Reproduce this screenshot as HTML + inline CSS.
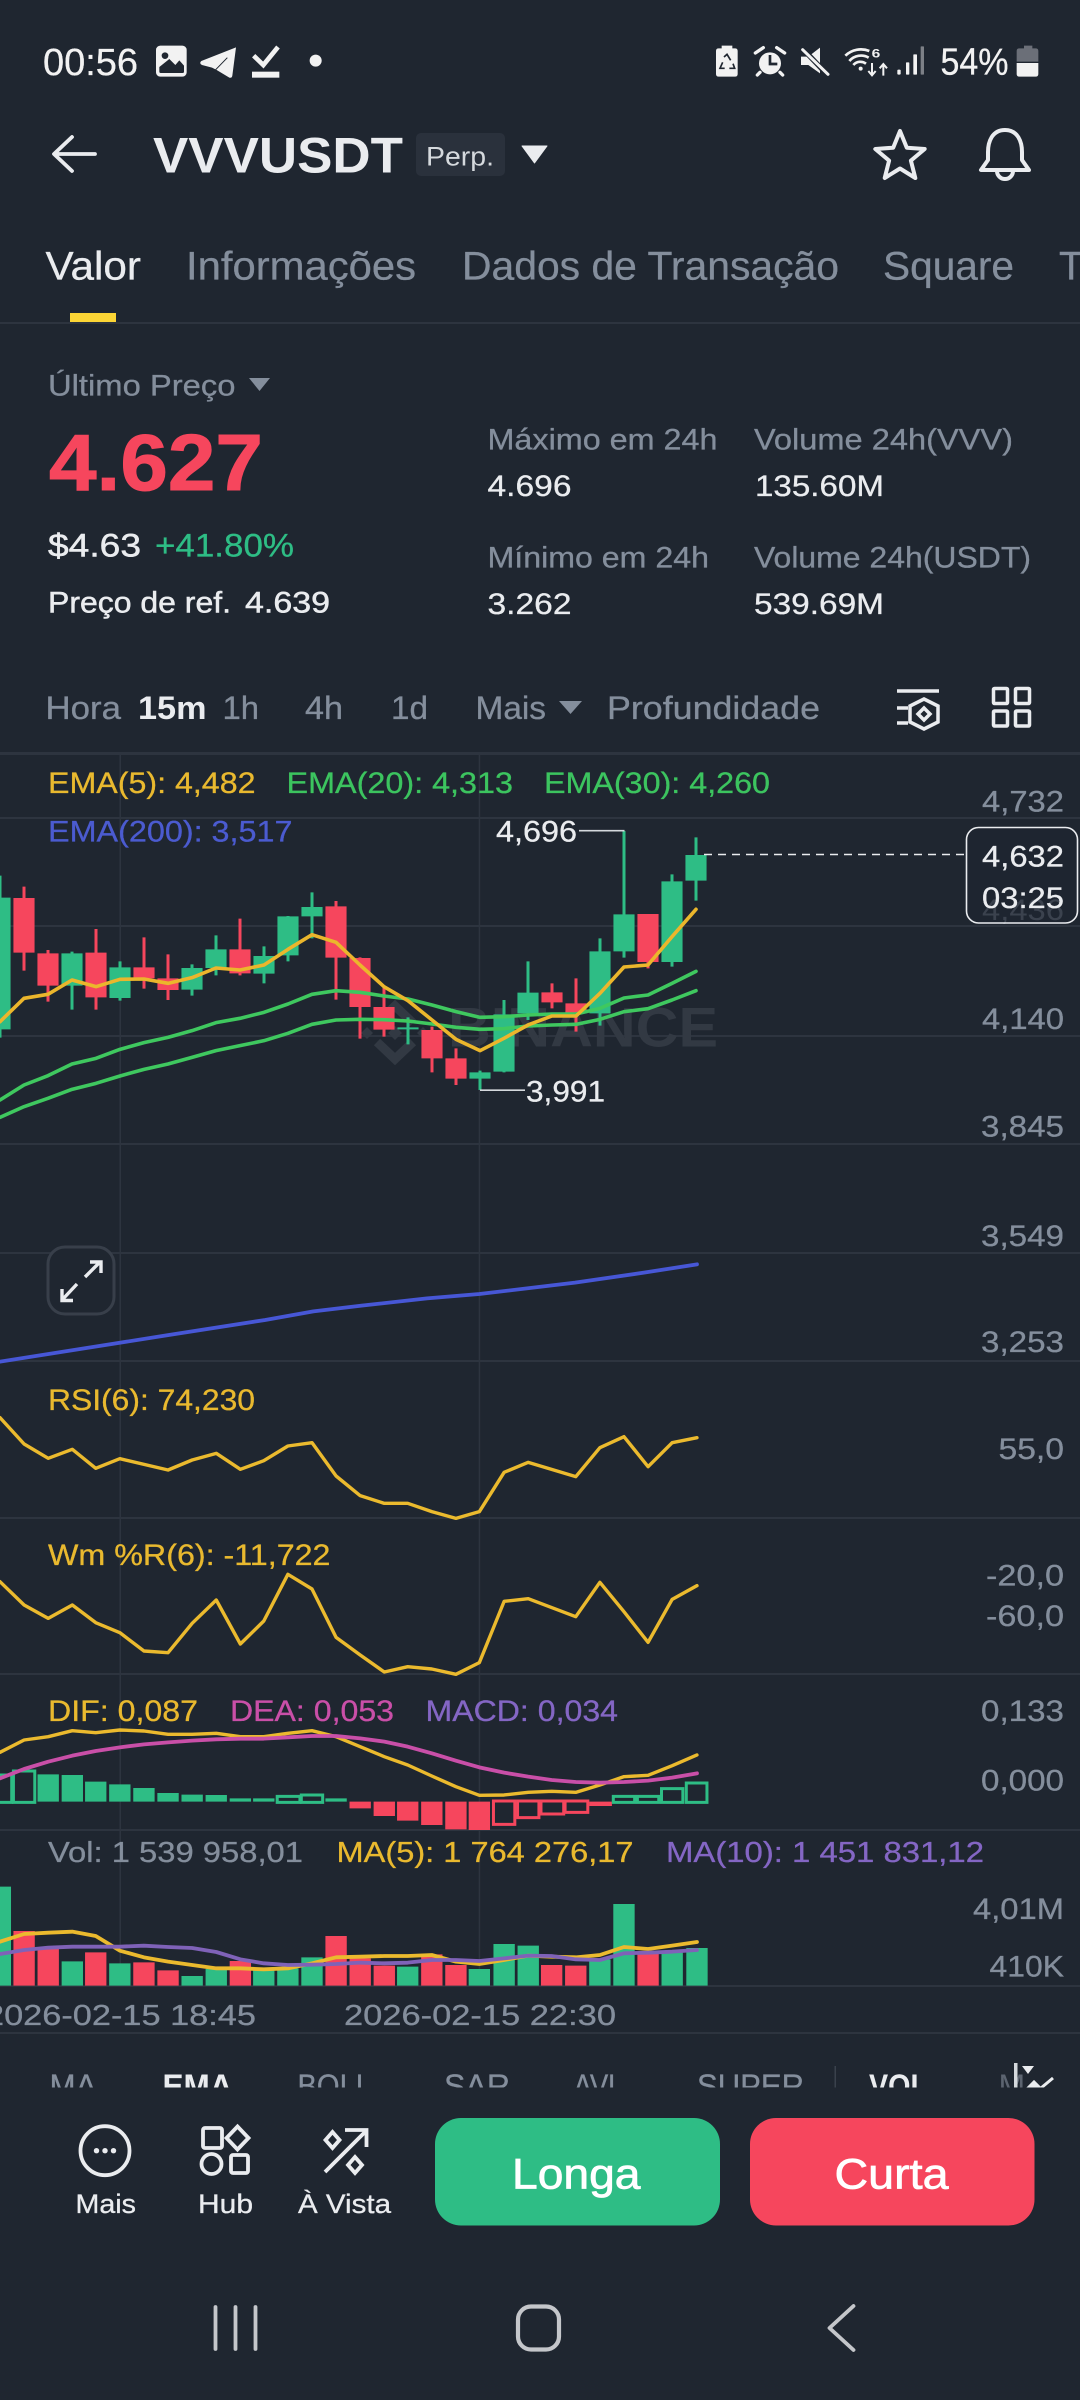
<!DOCTYPE html>
<html lang="pt"><head><meta charset="utf-8"><title>VVVUSDT</title>
<style>
html,body{margin:0;padding:0;background:#1f2630}
svg{display:block;font-family:"Liberation Sans",sans-serif}
.w{fill:#eaecef;stroke:#eaecef;stroke-width:.3}.g{fill:#848e9c;stroke:#848e9c;stroke-width:.3}.y{fill:#e9b92f;stroke:#e9b92f;stroke-width:.3}.e{fill:#3cc45f;stroke:#3cc45f;stroke-width:.3}.b{fill:#4b5bd0;stroke:#4b5bd0;stroke-width:.3}.p{fill:#c94fa8;stroke:#c94fa8;stroke-width:.3}.u{fill:#8466c4;stroke:#8466c4;stroke-width:.3}
text[font-weight="700"]{stroke:none}
.l{fill:none;stroke-linejoin:round;stroke-linecap:round}
.l polyline,.n{vector-effect:non-scaling-stroke}
</style></head><body>
<svg width="1080" height="2400" viewBox="0 0 1080 2400" xmlns="http://www.w3.org/2000/svg">
<defs><clipPath id="c1"><rect x="0" y="2055" width="1080" height="32.5"/></clipPath></defs>
<rect width="1080" height="2400" fill="#1f2630"/>

<!-- status bar -->
<text x="43" y="75" font-size="38" fill="#f2f2f2" stroke="#f2f2f2" stroke-width=".3" textLength="95" lengthAdjust="spacingAndGlyphs">00:56</text>
<g transform="translate(150 35) scale(.33333)">
<rect x="18" y="32" width="92" height="93" rx="13" fill="#f2f2f2"/>
<circle cx="45" cy="62" r="10" fill="#1f2630"/>
<path d="M28 110V96L58 72L76 90L88 76L102 92V110Q102 114 98 114H32Q28 114 28 110Z" fill="#1f2630"/>
<path d="M258 37L154 78Q146 85 156 90L186 98L200 105L238 128Q246 130 247 122Z" fill="#f2f2f2"/>
<path d="M197 104L232 68" stroke="#1f2630" stroke-width="3"/>
<path d="M311 62L340 90L384 36" fill="none" stroke="#f2f2f2" stroke-width="14"/>
<rect x="306" y="110" width="82" height="18" fill="#f2f2f2"/>
<circle cx="497" cy="77" r="18" fill="#f2f2f2"/>
</g>
<g transform="translate(700 35) scale(.33333)">
<path d="M65 32H97V40H105Q113 40 113 48V117Q113 125 105 125H56Q48 125 48 117V48Q48 40 56 40H65Z" fill="#f2f2f2"/>
<path d="M72 66L81 58L92 76M99 86L104 100H88M74 100H60L68 82" fill="none" stroke="#1f2630" stroke-width="5"/>
<circle cx="210" cy="85" r="33" fill="#f2f2f2"/>
<path d="M210 60V87H232" fill="none" stroke="#1f2630" stroke-width="8"/>
<path d="M166 54L190 38M230 38L254 54M180 112L172 120M240 112L248 120" stroke="#f2f2f2" stroke-width="10" stroke-linecap="round"/>
<path d="M303 65H325L360 38V115L325 90H303Z" fill="#f2f2f2"/>
<path d="M305 38L385 122" stroke="#1f2630" stroke-width="16"/>
<path d="M308 44L384 118" stroke="#f2f2f2" stroke-width="9" stroke-linecap="round"/>
<path d="M436 62A68 68 0 0 1 508 48M448 78A46 46 0 0 1 506 68M460 90A28 28 0 0 1 498 86" fill="none" stroke="#f2f2f2" stroke-width="8"/>
<circle cx="482" cy="101" r="6" fill="#f2f2f2"/>
<text x="515" y="68" font-size="36" font-weight="700" fill="#f2f2f2" textLength="26" lengthAdjust="spacingAndGlyphs">6</text>
<path d="M516 84V120M505 108L516 121L527 108M550 122V88M539 100L550 87L561 100" fill="none" stroke="#f2f2f2" stroke-width="6"/>
<rect x="592" y="104" width="10" height="15" rx="3" fill="#f2f2f2"/>
<rect x="618" y="82" width="10" height="37" rx="2" fill="#f2f2f2"/>
<rect x="640" y="58" width="11" height="61" rx="2" fill="#f2f2f2"/>
<rect x="662" y="34" width="10" height="85" rx="2" fill="#7d8087"/>
<path d="M972 32H997V40H1007Q1015 40 1015 48V80H950V48Q950 40 958 40H972Z" fill="#6b6f78"/>
<path d="M950 84H1015V117Q1015 125 1007 125H958Q950 125 950 117Z" fill="#f2f2f2"/>
</g>
<text x="940.5" y="74.5" font-size="38" fill="#f2f2f2" stroke="#f2f2f2" stroke-width=".3" textLength="68" lengthAdjust="spacingAndGlyphs">54%</text>

<!-- header -->
<path d="M95 154H56M72 137L54 154L72 171" fill="none" stroke="#eaecef" stroke-width="3.8" stroke-linecap="round" stroke-linejoin="round"/>
<text x="153" y="172.5" font-size="50" font-weight="700" class="w" textLength="250" lengthAdjust="spacingAndGlyphs">VVVUSDT</text>
<rect x="416" y="133" width="89" height="43" rx="5" fill="#2a313c"/>
<text x="426" y="165.5" font-size="27" fill="#d5d9dd" textLength="68" lengthAdjust="spacingAndGlyphs">Perp.</text>
<path d="M522 146H547L534.5 163Z" fill="#eaecef" stroke="#eaecef" stroke-width="1" stroke-linejoin="round"/>
<path d="M900 131L906.8 147.7L924.7 149L910.9 160.6L915.3 178L900 168.5L884.7 178L889.1 160.6L875.3 149L893.2 147.7Z" fill="none" stroke="#eaecef" stroke-width="4" stroke-linejoin="round"/>
<path d="M1005 130C992 130 988 142 988 152V160L981 170H1029L1022 160V152C1022 142 1018 130 1005 130ZM997 171A8 8 0 0 0 1013 171" fill="none" stroke="#eaecef" stroke-width="4" stroke-linejoin="round"/>

<!-- tabs -->
<text x="45.5" y="279.5" font-size="40" class="w" textLength="95.5" lengthAdjust="spacingAndGlyphs">Valor</text>
<text x="186" y="279.5" font-size="40" class="g" textLength="230" lengthAdjust="spacingAndGlyphs">Informações</text>
<text x="462" y="279.5" font-size="40" class="g" textLength="377" lengthAdjust="spacingAndGlyphs">Dados de Transação</text>
<text x="883" y="279.5" font-size="40" class="g" textLength="131" lengthAdjust="spacingAndGlyphs">Square</text>
<text x="1059" y="279.5" font-size="40" class="g">T</text>
<rect x="70" y="313" width="46" height="9" fill="#fcd535"/>
<rect x="0" y="322" width="1080" height="2" fill="#2d343f"/>

<!-- price -->
<text x="48" y="395.5" font-size="30" class="g" textLength="187.5" lengthAdjust="spacingAndGlyphs">Último Preço</text>
<path d="M249 378H270L259.5 391Z" fill="#848e9c"/>
<text x="49" y="490" font-size="80" font-weight="700" fill="#f6465d" stroke="#f6465d" stroke-width="1" style="stroke:#f6465d" textLength="214" lengthAdjust="spacingAndGlyphs">4.627</text>
<text x="48" y="556.5" font-size="32" class="w" style="stroke-width:.5" textLength="93" lengthAdjust="spacingAndGlyphs">$4.63</text>
<text x="155" y="556.5" font-size="32" fill="#2ebd85" stroke="#2ebd85" stroke-width=".3" textLength="139" lengthAdjust="spacingAndGlyphs">+41.80%</text>
<text x="48" y="612.5" font-size="30" class="w" style="stroke-width:.5" textLength="183" lengthAdjust="spacingAndGlyphs">Preço de ref.</text>
<text x="245" y="612.5" font-size="30" class="w" style="stroke-width:.5" textLength="85" lengthAdjust="spacingAndGlyphs">4.639</text>
<text x="487.5" y="449.5" font-size="30" class="g" textLength="230" lengthAdjust="spacingAndGlyphs">Máximo em 24h</text>
<text x="754" y="449.5" font-size="30" class="g" textLength="259" lengthAdjust="spacingAndGlyphs">Volume 24h(VVV)</text>
<text x="487.5" y="496" font-size="30" class="w" textLength="84" lengthAdjust="spacingAndGlyphs">4.696</text>
<text x="755" y="496" font-size="30" class="w" textLength="129" lengthAdjust="spacingAndGlyphs">135.60M</text>
<text x="487.5" y="567.5" font-size="30" class="g" textLength="221.5" lengthAdjust="spacingAndGlyphs">Mínimo em 24h</text>
<text x="754" y="567.5" font-size="30" class="g" textLength="277" lengthAdjust="spacingAndGlyphs">Volume 24h(USDT)</text>
<text x="487.5" y="614" font-size="30" class="w" textLength="84" lengthAdjust="spacingAndGlyphs">3.262</text>
<text x="754" y="614" font-size="30" class="w" textLength="130" lengthAdjust="spacingAndGlyphs">539.69M</text>

<!-- timeframe row -->
<text x="45.5" y="719" font-size="32" class="g" textLength="75.5" lengthAdjust="spacingAndGlyphs">Hora</text>
<text x="138" y="719" font-size="32" font-weight="700" class="w" textLength="68.5" lengthAdjust="spacingAndGlyphs">15m</text>
<text x="222.5" y="719" font-size="32" class="g" textLength="36.5" lengthAdjust="spacingAndGlyphs">1h</text>
<text x="305" y="719" font-size="32" class="g" textLength="38" lengthAdjust="spacingAndGlyphs">4h</text>
<text x="391" y="719" font-size="32" class="g" textLength="37" lengthAdjust="spacingAndGlyphs">1d</text>
<text x="475.5" y="719" font-size="32" class="g" textLength="70.5" lengthAdjust="spacingAndGlyphs">Mais</text>
<path d="M559 701H582L570.5 714Z" fill="#848e9c"/>
<text x="607" y="719" font-size="32" class="g" textLength="213" lengthAdjust="spacingAndGlyphs">Profundidade</text>
<g fill="none" stroke="#eaecef" stroke-width="3.5">
<path d="M897 691H939M897 708H908M897 723H908"/>
<path d="M924 699L938 706V722L924 729L910 722V706Z"/>
<path d="M924 708L930 714L924 720L918 714Z"/>
<rect x="993.5" y="688.5" width="14" height="15" rx="1"/><rect x="1015.5" y="688.5" width="14" height="15" rx="1"/>
<rect x="993.5" y="711" width="14" height="15" rx="1"/><rect x="1015.5" y="711" width="14" height="15" rx="1"/>
</g>

<!-- grid -->
<g fill="#2d343f">
<rect y="752" width="1080" height="3"/>
<rect y="817" width="1080" height="2"/><rect y="925" width="1080" height="2"/><rect y="1035" width="1080" height="2"/>
<rect y="1143" width="1080" height="2"/><rect y="1252" width="1080" height="2"/><rect y="1360" width="1080" height="2"/>
<rect y="1517" width="1080" height="2"/><rect y="1673" width="1080" height="2"/><rect y="1829" width="1080" height="2"/>
<rect y="1985" width="1080" height="2"/><rect y="2032" width="1080" height="2"/>
<rect x="119.5" y="755" width="1.5" height="1230"/><rect x="478.7" y="755" width="1.5" height="1230"/>
</g>

<!-- watermark -->
<g fill="none" stroke="#323943" stroke-width="9">
<path d="M377 1042L395 1059L413 1042M377 1023L395 1006L413 1023"/>
<path d="M395 1026L402 1033L395 1040L388 1033Z" fill="#323943" stroke="none"/>
<path d="M367 1027L373 1033L367 1039L361 1033Z" fill="#323943" stroke="none"/>
<path d="M423 1027L429 1033L423 1039L417 1033Z" fill="#323943" stroke="none"/>
</g>
<text x="448" y="1046.5" font-size="56" font-weight="700" fill="#323943" textLength="270" lengthAdjust="spacingAndGlyphs">BINANCE</text>

<!-- candles -->
<g transform="translate(0 760) scale(24 .33333)">
<path fill="#2ebd85" d="M-.0625 347h.125V833h-.125zM-.44 413h.88V808h-.88z
M2.9375 575h.125V749h-.125zM2.56 580h.88V677h-.88z
M4.9375 604h.125V722h-.125zM4.56 622h.88V714h-.88z
M7.9375 613h.125V707h-.125zM7.56 624h.88V689h-.88z
M8.9375 526h.125V646h-.125zM8.56 568h.88V624h-.88z
M10.9375 559h.125V670h-.125zM10.56 588h.88V641h-.88z
M11.9375 468h.125V604h-.125zM11.56 469h.88V586h-.88z
M12.9375 397h.125V535h-.125zM12.56 441h.88V469h-.88z
M16.9375 772h.125V853h-.125zM16.56 802h.88V808h-.88z
M19.9375 932h.125V990h-.125zM19.56 937h.88V956h-.88z
M20.9375 720h.125V937h-.125zM20.56 763h.88V935h-.88z
M21.9375 604h.125V780h-.125zM21.56 698h.88V760h-.88z
M24.9375 535h.125V797h-.125zM24.56 574h.88V760h-.88z
M25.9375 213h.125V593h-.125zM25.56 463h.88V574h-.88z
M27.9375 343h.125V620h-.125zM27.56 364h.88V606h-.88z
M28.9375 232h.125V422h-.125zM28.56 285h.88V362h-.88z"/>
<path fill="#f6465d" d="M.9375 380h.125V632h-.125zM.56 414h.88V578h-.88z
M1.9375 570h.125V725h-.125zM1.56 580h.88V677h-.88z
M3.9375 507h.125V749h-.125zM3.56 578h.88V712h-.88z
M5.9375 532h.125V686h-.125zM5.56 622h.88V655h-.88z
M6.9375 583h.125V720h-.125zM6.56 655h.88V690h-.88z
M9.9375 476h.125V646h-.125zM9.56 568h.88V640h-.88z
M13.9375 423h.125V719h-.125zM13.56 439h.88V593h-.88z
M14.9375 592h.125V836h-.125zM14.56 594h.88V741h-.88z
M15.9375 680h.125V830h-.125zM15.56 741h.88V809h-.88z
M17.9375 800h.125V937h-.125zM17.56 810h.88V895h-.88z
M18.9375 865h.125V975h-.125zM18.56 895h.88V956h-.88z
M22.9375 670h.125V745h-.125zM22.56 697h.88V727h-.88z
M23.9375 655h.125V815h-.125zM23.56 730h.88V760h-.88z
M26.9375 462h.125V625h-.125zM26.56 462h.88V606h-.88z"/>
<g class="l" stroke-width="3.6">
<polyline stroke="#3fc85f" points="0,1020 1,975 2,947 3,912 4,895 5,868 6,848 7,832 8,812 9,788 10,775 11,757 12,732 13,703 14,692 15,697 16,708 17,717 18,735 19,755 20,772 21,770 22,765 23,762 24,762 25,745 26,714 27,705 28,670 29,634"/>
<polyline stroke="#3fc85f" points="0,1072 1,1040 2,1015 3,988 4,970 5,948 6,928 7,912 8,892 9,872 10,857 11,842 12,820 13,793 14,780 15,778 16,779 17,783 18,792 19,802 20,808 21,806 22,798 23,795 24,793 25,778 26,755 27,746 28,720 29,692"/>
<polyline stroke="#ebb62c" points="0,785 1,715 2,703 3,660 4,680 5,658 6,657 7,670 8,653 9,624 10,630 11,615 12,568 13,524 14,547 15,615 16,680 17,722 18,780 19,838 20,872 21,835 22,795 23,768 24,768 25,700 26,621 27,615 28,530 29,448"/>
</g>
</g>

<!-- chart labels -->
<text x="48" y="793" font-size="30" class="y" textLength="207.5" lengthAdjust="spacingAndGlyphs">EMA(5): 4,482</text>
<text x="286.5" y="793" font-size="30" class="e" textLength="226.5" lengthAdjust="spacingAndGlyphs">EMA(20): 4,313</text>
<text x="544" y="793" font-size="30" class="e" textLength="226" lengthAdjust="spacingAndGlyphs">EMA(30): 4,260</text>
<text x="48" y="841.5" font-size="30" class="b" textLength="244.5" lengthAdjust="spacingAndGlyphs">EMA(200): 3,517</text>
<text x="982" y="811.5" font-size="30" class="g" textLength="82" lengthAdjust="spacingAndGlyphs">4,732</text>
<text x="982" y="920" font-size="30" fill="#848e9c" textLength="82" lengthAdjust="spacingAndGlyphs">4,436</text>
<rect x="966.5" y="827.5" width="111" height="95.5" rx="12" fill="#1f2630" fill-opacity=".72" stroke="#eaecef" stroke-width="1.6"/>
<path d="M704 854.5H966" stroke="#eaecef" stroke-width="1.6" stroke-dasharray="8 6"/>
<text x="982" y="866.5" font-size="30" class="w" textLength="82" lengthAdjust="spacingAndGlyphs">4,632</text>
<text x="982" y="908" font-size="30" class="w" textLength="82" lengthAdjust="spacingAndGlyphs">03:25</text>
<text x="496" y="841.5" font-size="30" class="w" textLength="81" lengthAdjust="spacingAndGlyphs">4,696</text>
<path d="M579 830.7H624.5" stroke="#d5d9dd" stroke-width="1.6"/>
<path d="M480 1090.2H525" stroke="#d5d9dd" stroke-width="1.6"/>
<text x="526" y="1101.5" font-size="30" class="w" textLength="79" lengthAdjust="spacingAndGlyphs">3,991</text>
<text x="982" y="1029" font-size="30" class="g" textLength="82" lengthAdjust="spacingAndGlyphs">4,140</text>
<text x="981" y="1136.5" font-size="30" class="g" textLength="83" lengthAdjust="spacingAndGlyphs">3,845</text>
<text x="981" y="1246" font-size="30" class="g" textLength="83" lengthAdjust="spacingAndGlyphs">3,549</text>
<text x="981" y="1352" font-size="30" class="g" textLength="83" lengthAdjust="spacingAndGlyphs">3,253</text>
<text x="998.5" y="1459" font-size="30" class="g" textLength="65.5" lengthAdjust="spacingAndGlyphs">55,0</text>
<text x="48" y="1410" font-size="30" class="y" textLength="207" lengthAdjust="spacingAndGlyphs">RSI(6): 74,230</text>

<!-- expand button -->
<rect x="48" y="1247" width="66" height="67" rx="17" fill="#1f2630" stroke="#383f4a" stroke-width="3"/>
<path d="M85 1277L100 1262M90 1262H101V1273M77 1284L62 1300M62 1289V1300.5H73" fill="none" stroke="#eaecef" stroke-width="3.4"/>

<!-- EMA200 + RSI -->
<g class="l" transform="translate(0 1120) scale(.68871 .33333)">
<polyline stroke="#4757d6" stroke-width="3.8" points="0,725 175,668 245,645 385,600 455,574 525,557 620,535 696,522 835,488 935,458 1012,433"/>
<polyline stroke="#ebba2e" stroke-width="3.4" points="0,893 35,972 70,1015 105,988 139,1045 174,1016 244,1050 279,1020 314,1000 349,1048 383,1022 418,978 453,968 488,1068 523,1127 558,1150 592,1150 627,1175 662,1195 696,1175 732,1057 767,1027 836,1070 871,983 906,950 941,1040 976,968 1012,953"/>
</g>

<!-- Wm %R -->
<text x="48" y="1565" font-size="30" class="y" textLength="282.5" lengthAdjust="spacingAndGlyphs">Wm %R(6): -11,722</text>
<text x="986" y="1585.5" font-size="30" class="g" textLength="78" lengthAdjust="spacingAndGlyphs">-20,0</text>
<text x="986" y="1626" font-size="30" class="g" textLength="78" lengthAdjust="spacingAndGlyphs">-60,0</text>
<text x="48" y="1721" font-size="30" class="y" textLength="150" lengthAdjust="spacingAndGlyphs">DIF: 0,087</text>
<text x="230" y="1721" font-size="30" class="p" textLength="164" lengthAdjust="spacingAndGlyphs">DEA: 0,053</text>
<text x="425.5" y="1721" font-size="30" class="u" textLength="192.5" lengthAdjust="spacingAndGlyphs">MACD: 0,034</text>
<text x="981" y="1721" font-size="30" class="g" textLength="83" lengthAdjust="spacingAndGlyphs">0,133</text>
<text x="981" y="1790.5" font-size="30" class="g" textLength="83" lengthAdjust="spacingAndGlyphs">0,000</text>

<g transform="translate(0 1520) scale(.68871 .33333)">
<path fill="#2ebd85" d="M54.5 763h31V845h-31zM89.5 765h31V845h-31zM123.5 785h31V845h-31zM158.5 793h31V845h-31zM193.5 804h31V845h-31zM228.5 819h31V845h-31zM263.5 824h31V845h-31zM298.5 825h31V845h-31zM333.5 835h31V845h-31zM367.5 835h31V845h-31zM472.5 835h31V845h-31z"/>
<path fill="#f6465d" d="M507.5 845h31V865h-31zM542.5 845h31V888h-31zM576.5 845h31V902h-31zM611.5 845h31V915h-31zM646.5 845h31V928h-31zM680.5 845h31V930h-31zM855.5 845h33V858h-33z"/>
<g fill="none" stroke="#2ebd85" stroke-width="3">
<rect class="n" x="-15" y="765" width="32" height="82"/><rect class="n" x="19.5" y="753" width="31" height="94"/>
<rect class="n" x="402.5" y="829" width="33" height="18"/><rect class="n" x="437.5" y="825" width="31" height="22"/>
<rect class="n" x="890.5" y="829" width="31" height="18"/><rect class="n" x="925.5" y="829" width="31" height="18"/>
<rect class="n" x="960.5" y="806" width="31" height="41"/><rect class="n" x="996.5" y="789" width="30" height="58"/>
</g>
<g fill="none" stroke="#f6465d" stroke-width="3">
<rect class="n" x="716.5" y="843" width="31" height="70"/><rect class="n" x="751.5" y="843" width="31" height="50"/>
<rect class="n" x="785.5" y="843" width="33" height="39"/><rect class="n" x="820.5" y="843" width="33" height="34"/>
</g>
<g class="l">
<polyline stroke="#ebba2e" stroke-width="3.4" points="0,185 35,255 70,295 105,255 139,308 174,338 209,393 244,398 279,310 314,240 349,372 383,303 418,163 453,207 488,352 523,405 558,456 592,440 627,447 662,463 696,428 732,244 767,236 836,290 871,187 906,275 941,367 976,238 1012,197"/>
<polyline stroke="#ebba2e" stroke-width="3.4" points="0,697 35,660 70,650 105,632 139,638 174,630 209,633 244,643 279,643 314,640 349,650 383,650 418,640 453,632 488,650 523,680 558,710 592,735 627,768 662,800 696,826 732,825 767,817 801,814 836,817 871,795 906,770 941,766 976,737 1012,705"/>
<polyline stroke="#c94fa8" stroke-width="3.8" points="0,775 35,747 70,725 105,707 139,693 174,682 209,673 244,667 279,662 314,658 349,656 383,656 418,652 453,648 488,648 523,655 558,665 592,680 627,700 662,722 696,742 732,758 767,770 801,780 836,786 871,788 906,786 941,782 976,773 1012,760"/>
</g>
</g>

<!-- volume -->
<text x="48" y="1862" font-size="29" class="g" textLength="255" lengthAdjust="spacingAndGlyphs">Vol: 1 539 958,01</text>
<text x="336.5" y="1862" font-size="29" class="y" textLength="297" lengthAdjust="spacingAndGlyphs">MA(5): 1 764 276,17</text>
<text x="666" y="1862" font-size="29" class="u" textLength="318" lengthAdjust="spacingAndGlyphs">MA(10): 1 451 831,12</text>
<text x="973" y="1919" font-size="30" class="g" textLength="91" lengthAdjust="spacingAndGlyphs">4,01M</text>
<text x="989.5" y="1976.5" font-size="30" class="g" textLength="74.5" lengthAdjust="spacingAndGlyphs">410K</text>
<g transform="translate(0 1820) scale(.68871 .33333)">
<path fill="#2ebd85" d="M-15 200h31V497h-31zM89.5 424h31V497h-31zM158.5 430h31V497h-31zM263.5 468h31V497h-31zM298.5 447h31V497h-31zM367.5 450h31V497h-31zM402.5 445h31V497h-31zM437.5 412h31V497h-31zM576.5 440h31V497h-31zM680.5 447h31V497h-31zM716.5 372h31V497h-31zM751.5 377h31V497h-31zM855.5 418h31V497h-31zM890.5 252h31V497h-31zM960.5 398h31V497h-31zM996.5 384h31V497h-31z"/>
<path fill="#f6465d" d="M19.5 333h31V497h-31zM54.5 385h31V497h-31zM123.5 397h31V497h-31zM193.5 427h31V497h-31zM228.5 451h31V497h-31zM333.5 423h31V497h-31zM472.5 348h31V497h-31zM507.5 415h31V497h-31zM542.5 437h31V497h-31zM611.5 403h31V497h-31zM646.5 435h31V497h-31zM785.5 435h31V497h-31zM820.5 437h31V497h-31zM925.5 395h31V497h-31z"/>
<g class="l">
<polyline stroke="#ebba2e" stroke-width="3.8" points="0,365 35,342 70,338 105,335 139,348 174,392 209,412 244,425 279,435 314,445 349,445 383,448 418,445 453,430 488,412 523,410 558,408 592,408 627,405 662,425 696,432 732,420 767,407 801,410 836,412 871,405 906,381 941,387 976,377 1012,366"/>
<polyline stroke="#7f62b8" stroke-width="3.8" points="0,402 35,390 70,383 105,380 139,380 174,380 209,377 244,381 279,384 314,396 349,418 383,430 418,435 453,434 488,432 523,428 558,430 592,428 627,420 662,420 696,423 732,415 767,407 801,408 836,418 871,420 906,400 941,398 976,395 1012,390"/>
</g>
</g>
<text x="-15" y="2025" font-size="29" class="g" textLength="271" lengthAdjust="spacingAndGlyphs">2026-02-15 18:45</text>
<text x="344" y="2025" font-size="29" class="g" textLength="272" lengthAdjust="spacingAndGlyphs">2026-02-15 22:30</text>

<!-- indicator row (clipped) -->
<g clip-path="url(#c1)" font-size="32">
<text x="49.5" y="2097" class="g" textLength="47" lengthAdjust="spacingAndGlyphs">MA</text>
<text x="162.5" y="2097" class="w" font-weight="700" textLength="70" lengthAdjust="spacingAndGlyphs">EMA</text>
<text x="297.5" y="2097" class="g" textLength="74.5" lengthAdjust="spacingAndGlyphs">BOLL</text>
<text x="444" y="2097" class="g" textLength="66" lengthAdjust="spacingAndGlyphs">SAR</text>
<text x="573.5" y="2097" class="g" textLength="50" lengthAdjust="spacingAndGlyphs">AVL</text>
<text x="697" y="2097" class="g" textLength="107" lengthAdjust="spacingAndGlyphs">SUPER</text>
<rect x="834.5" y="2066" width="1.5" height="22" fill="#3a414c"/>
<text x="869" y="2097" class="w" font-weight="700" textLength="59" lengthAdjust="spacingAndGlyphs">VOL</text>
<text x="998.5" y="2097" fill="#5c6470">M</text>
<rect x="1014" y="2063" width="3.5" height="26" fill="#d5d9dd"/>
<path d="M1022 2066H1034L1028 2074Z" fill="#eaecef"/>
<path d="M1028 2088L1034 2082L1040 2088ZM1041 2088L1053 2078" fill="#eaecef" stroke="#eaecef" stroke-width="3"/>
</g>

<!-- bottom actions -->
<g fill="none" stroke="#eaecef" stroke-width="3.8">
<circle cx="105" cy="2150.7" r="24.5"/>
<rect x="203" y="2128" width="19" height="20" rx="2"/>
<path d="M237.5 2126.5L248.5 2138L237.5 2149.5L226.5 2138Z"/>
<circle cx="211.5" cy="2164" r="10"/>
<rect x="231" y="2155" width="17" height="18" rx="2"/>
<path d="M325 2172L366 2131M345 2130H366.5V2147"/>
<path d="M332.5 2132L339.5 2140L332.5 2148L325.5 2140Z"/>
<path d="M355 2157L362 2165L355 2173L348 2165Z"/>
</g>
<g fill="#eaecef"><circle cx="96.5" cy="2150.7" r="2.7"/><circle cx="105" cy="2150.7" r="2.7"/><circle cx="113.5" cy="2150.7" r="2.7"/></g>
<text x="75.5" y="2213" font-size="27" class="w" textLength="60.5" lengthAdjust="spacingAndGlyphs">Mais</text>
<text x="198" y="2213" font-size="27" class="w" textLength="55" lengthAdjust="spacingAndGlyphs">Hub</text>
<text x="298" y="2213" font-size="27" class="w" textLength="93" lengthAdjust="spacingAndGlyphs">À Vista</text>
<rect x="435" y="2118" width="285" height="107.5" rx="26" fill="#2ebd85"/>
<rect x="750" y="2118" width="284.5" height="107.5" rx="26" fill="#f6465d"/>
<text x="512" y="2188.5" font-size="43" fill="#fff" stroke="#fff" stroke-width=".7" textLength="128.5" lengthAdjust="spacingAndGlyphs">Longa</text>
<text x="834.5" y="2188.5" font-size="43" fill="#fff" stroke="#fff" stroke-width=".7" textLength="114" lengthAdjust="spacingAndGlyphs">Curta</text>

<!-- nav bar -->
<g fill="none" stroke="#c4c6ca" stroke-width="3.8" stroke-linecap="round" stroke-linejoin="round">
<path d="M215.5 2307V2349M235.5 2307V2349M255.5 2307V2349"/>
<rect x="518" y="2306.5" width="41" height="43" rx="13" stroke-width="4.2"/>
<path d="M853.5 2306L829.5 2328L853.5 2350"/>
</g>
</svg>
</body></html>
